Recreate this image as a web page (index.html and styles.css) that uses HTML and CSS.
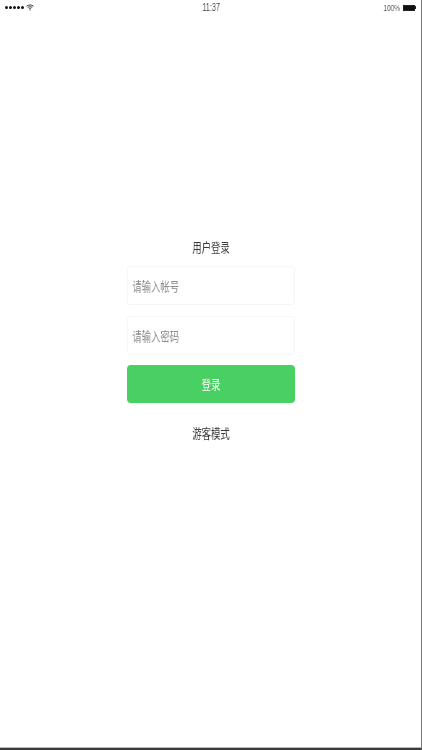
FILE: index.html
```html
<!DOCTYPE html>
<html lang="zh-CN">
<head>
<meta charset="utf-8">
<title>用户登录</title>
<link rel="stylesheet" href="styles.css">
</head>
<body>
<div class="screen">
  <div class="status">
    <div class="status-left">
      <span class="dots"><i></i><i></i><i></i><i></i><i></i></span>
      <svg class="wifi" width="8" height="7" viewBox="0 0 8 7"><path d="M.5 2.3C2.5.5 5.5.5 7.5 2.3M1.7 3.6C3 2.5 5 2.5 6.3 3.6M2.9 4.9C3.5 4.4 4.5 4.4 5.1 4.9" fill="none" stroke="#222" stroke-width=".9"/><path d="M4 6.8 3.2 5.8h1.6z" fill="#222"/></svg>
    </div>
    <div class="status-time"><span class="squeeze">11:37</span></div>
    <div class="status-right">
      <span class="squeeze pct">100%</span>
      <span class="battery"><b></b></span><span class="nub"></span>
    </div>
  </div>
  <main class="login">
    <div class="title"><span class="squeeze">用户登录</span></div>
    <div class="field"><input class="input" type="text" placeholder="请输入帐号"></div>
    <div class="field"><input class="input" type="password" placeholder="请输入密码"></div>
    <button class="submit" type="button"><span class="squeeze">登录</span></button>
    <div class="guest"><span class="squeeze">游客模式</span></div>
  </main>
</div>
</body>
</html>
```
FILE: styles.css
```css
* { box-sizing: border-box; }
html, body { margin: 0; height: 100%; }
body {
  background: #fff;
  font-family: "Noto Sans CJK SC", "Liberation Sans", sans-serif;
  overflow: hidden;
}
.screen {
  width: 422px;
  height: 750px;
  border-right: 1px solid #777;
  border-bottom: 2px solid #3c3c3c;
  box-shadow: inset 0 -1px 0 #bbb;
  display: flex;
  flex-direction: column;
  overflow: hidden;
}
.squeeze { display: inline-block; transform: scaleX(.72); white-space: nowrap; will-change: transform; }
.status {
  height: 15px;
  display: grid;
  grid-template-columns: 1fr auto 1fr;
  align-items: center;
  color: #444;
  font-family: "Liberation Sans", sans-serif;
  font-size: 10px;
  padding: 0 1px 0 5px;
}
.status-left { display: flex; align-items: center; gap: 2px; }
.dots { display: flex; gap: 1px; }
.dots i { width: 3px; height: 3px; border-radius: 50%; background: #111; }
.status-time { margin-right: 3px; }
.status-right { display: flex; align-items: center; justify-content: flex-end; }
.pct { font-size: 9px; color: #555; margin-right: 3px; transform-origin: right center; }
.battery {
  width: 12px; height: 6px; border: 1px solid #222; background: #fff; display: block;
}
.battery b { display: block; width: 100%; height: 100%; background: #111; }
.nub { width: 1px; height: 3px; background: #222; margin-right: 4px; }
.login {
  width: 168px;
  margin: 223px 0 0 127px;
  display: flex;
  flex-direction: column;
  align-items: stretch;
}
.title, .guest {
  text-align: center;
  font-size: 13px;
  line-height: 18px;
  color: #3a3a3a;
}
.field {
  height: 39px;
  border: 1px solid #f6f6f6;
  border-radius: 3px;
  overflow: hidden;
  margin-top: 11px;
}
.title + .field { margin-top: 10px; }
.input {
  display: block;
  width: 230px;
  height: 37px;
  border: 0;
  outline: 0;
  padding: 0 0 0 6px;
  background: transparent;
  font: 400 13px "Noto Sans CJK SC", sans-serif;
  transform: scaleX(.72);
  transform-origin: left center;
  will-change: transform;
}
.input::placeholder { color: #8a8a8a; opacity: 1; }
.submit {
  height: 38px;
  margin-top: 10px;
  border: 0;
  border-radius: 4px;
  background: #48d063;
  color: #fff;
  font: 400 13px "Noto Sans CJK SC", sans-serif;
  padding: 0 0 2px;
}
.guest { margin-top: 21px; }
```
